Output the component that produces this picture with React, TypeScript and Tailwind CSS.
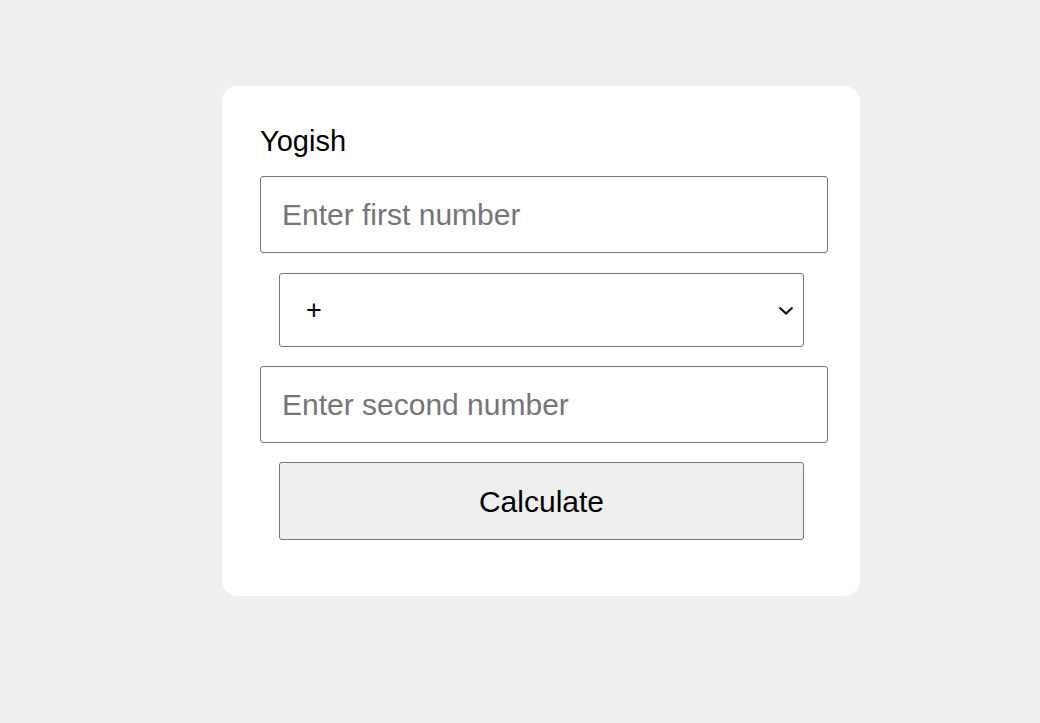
import { useState } from 'react';

export default function App() {
  const [a, setA] = useState('');
  const [b, setB] = useState('');
  const [op, setOp] = useState('+');

  return (
    <div className="min-h-[723px] bg-[#efefef] pl-[222px] pt-[86px] font-['Liberation_Sans',Arial,sans-serif]">
      <div className="flex w-[638px] flex-col rounded-[16px] bg-white pb-[56px] pl-[38px] pr-[32px] pt-[39px]">
        <h1 className="text-[29px] leading-[33px] text-black">Yogish</h1>

        <input
          value={a}
          onChange={(e) => setA(e.target.value)}
          placeholder="Enter first number"
          className="mt-[18px] h-[77px] w-[568px] rounded-[3px] border border-[#767676] px-[21px] text-[30px] text-black outline-none placeholder:text-[#757575]"
        />

        <div className="relative ml-[19px] mt-[20px] w-[525px]">
          <select
            value={op}
            onChange={(e) => setOp(e.target.value)}
            className="h-[74px] w-full appearance-none rounded-[3px] border border-[#767676] bg-white pl-[26px] text-[27px] text-black outline-none"
          >
            <option value="+">+</option>
            <option value="-">-</option>
            <option value="*">*</option>
            <option value="/">/</option>
          </select>
          <svg
            className="pointer-events-none absolute right-[9px] top-[30px] h-[14px] w-[18px]"
            viewBox="0 0 18 14"
            fill="none"
          >
            <path d="M2.5 4.5 9 10.5 15.5 4.5" stroke="#111" strokeWidth="2.2" />
          </svg>
        </div>

        <input
          value={b}
          onChange={(e) => setB(e.target.value)}
          placeholder="Enter second number"
          className="mt-[19px] h-[77px] w-[568px] rounded-[3px] border border-[#767676] px-[21px] text-[30px] text-black outline-none placeholder:text-[#757575]"
        />

        <button className="ml-[19px] mt-[19px] h-[78px] w-[525px] rounded-[3px] border border-[#767676] bg-[#efefef] text-[30px] text-black">
          Calculate
        </button>
      </div>
    </div>
  );
}
